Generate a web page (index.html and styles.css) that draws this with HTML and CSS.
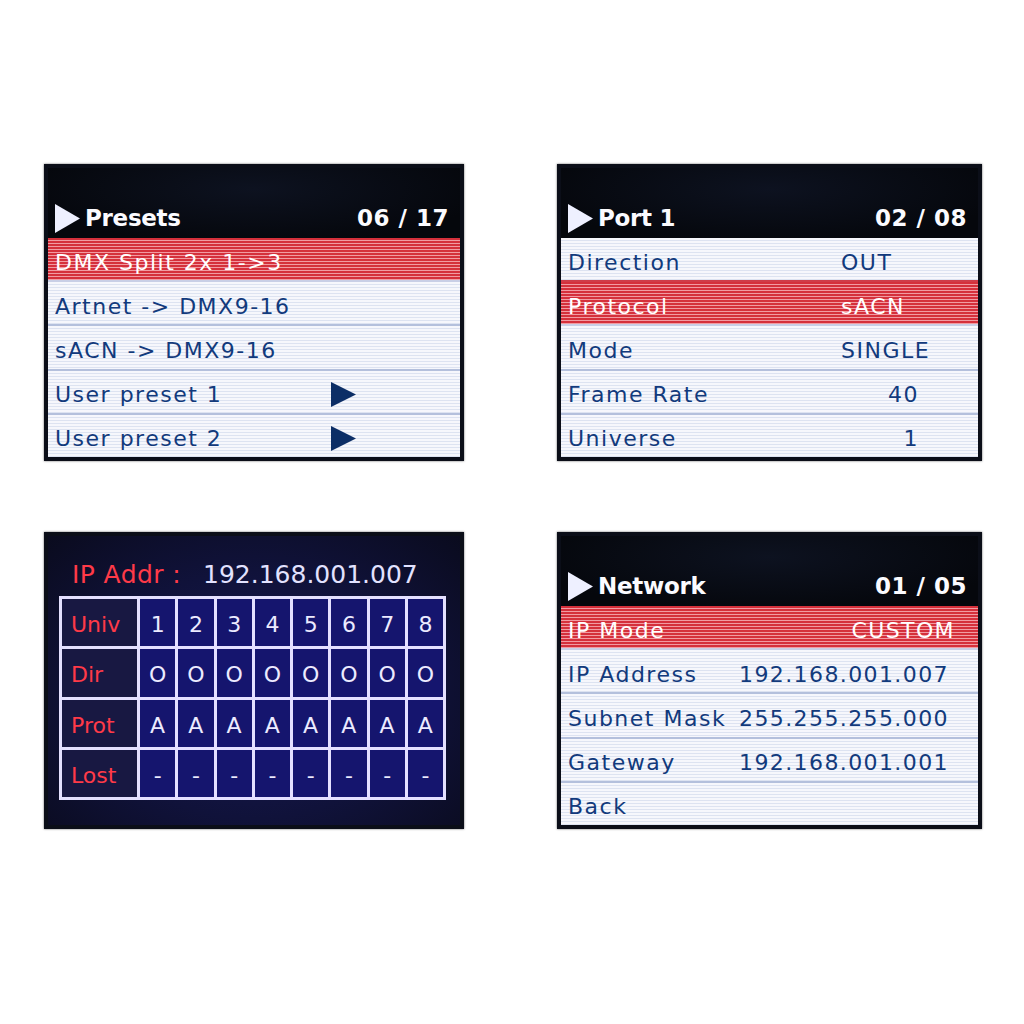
FILE: index.html
```html
<!DOCTYPE html>
<html lang="en">
<head>
  <meta charset="UTF-8" />
  <title>DMX Node - Display Screens</title>
  <link rel="stylesheet" href="styles.css">
</head>
<body>
  <div class="board">

    <!-- Presets menu -->
    <div class="screen">
      <div class="screen-head">
        <svg class="play" viewBox="0 0 25 29"><polygon points="0,0 25,14.5 0,29" /></svg>
        <span class="title">Presets</span>
        <span class="pager">06 / 17</span>
      </div>
      <div class="rows">
        <div class="row active"><span class="label">DMX Split 2x 1-&gt;3</span></div>
        <div class="row"><span class="label">Artnet -&gt; DMX9-16</span></div>
        <div class="row"><span class="label">sACN -&gt; DMX9-16</span></div>
        <div class="row"><span class="label preset">User preset 1</span>
          <svg class="sub" viewBox="0 0 25 25"><polygon points="0,0 25,12.5 0,25" /></svg></div>
        <div class="row"><span class="label preset">User preset 2</span>
          <svg class="sub" viewBox="0 0 25 25"><polygon points="0,0 25,12.5 0,25" /></svg></div>
      </div>
    </div>

    <!-- Port settings -->
    <div class="screen wide">
      <div class="screen-head">
        <svg class="play" viewBox="0 0 25 29"><polygon points="0,0 25,14.5 0,29" /></svg>
        <span class="title">Port 1</span>
        <span class="pager">02 / 08</span>
      </div>
      <div class="rows port">
        <div class="row"><span class="label">Direction</span><span class="value">OUT</span></div>
        <div class="row active"><span class="label">Protocol</span><span class="value">sACN</span></div>
        <div class="row"><span class="label">Mode</span><span class="value">SINGLE</span></div>
        <div class="row"><span class="label">Frame Rate</span><span class="value num">40</span></div>
        <div class="row"><span class="label">Universe</span><span class="value num">1</span></div>
      </div>
    </div>

    <!-- Status overview -->
    <div class="screen status">
      <div class="ip-line"><span class="ip-key">IP Addr :</span><span class="ip-val">192.168.001.007</span></div>
      <div class="grid">
        <div class="cell key">Univ</div>
        <div class="cell">1</div><div class="cell">2</div><div class="cell">3</div><div class="cell">4</div>
        <div class="cell">5</div><div class="cell">6</div><div class="cell">7</div><div class="cell">8</div>
        <div class="cell key">Dir</div>
        <div class="cell">O</div><div class="cell">O</div><div class="cell">O</div><div class="cell">O</div>
        <div class="cell">O</div><div class="cell">O</div><div class="cell">O</div><div class="cell">O</div>
        <div class="cell key">Prot</div>
        <div class="cell">A</div><div class="cell">A</div><div class="cell">A</div><div class="cell">A</div>
        <div class="cell">A</div><div class="cell">A</div><div class="cell">A</div><div class="cell">A</div>
        <div class="cell key">Lost</div>
        <div class="cell">-</div><div class="cell">-</div><div class="cell">-</div><div class="cell">-</div>
        <div class="cell">-</div><div class="cell">-</div><div class="cell">-</div><div class="cell">-</div>
      </div>
    </div>

    <!-- Network settings -->
    <div class="screen wide">
      <div class="screen-head">
        <svg class="play" viewBox="0 0 25 29"><polygon points="0,0 25,14.5 0,29" /></svg>
        <span class="title">Network</span>
        <span class="pager">01 / 05</span>
      </div>
      <div class="rows net">
        <div class="row active"><span class="label">IP Mode</span><span class="value right">CUSTOM</span></div>
        <div class="row"><span class="label">IP Address</span><span class="value">192.168.001.007</span></div>
        <div class="row"><span class="label">Subnet Mask</span><span class="value">255.255.255.000</span></div>
        <div class="row"><span class="label">Gateway</span><span class="value">192.168.001.001</span></div>
        <div class="row"><span class="label">Back</span></div>
      </div>
    </div>

  </div>
</body>
</html>
```

FILE: styles.css
```css
* { margin: 0; padding: 0; box-sizing: border-box; }
body {
  background: #fff;
  font-family: "DejaVu Sans", sans-serif;
  width: 1024px; height: 1024px; overflow: hidden;
}
.board {
  display: grid;
  grid-template-columns: 420px 425px;
  grid-auto-rows: 297px;
  column-gap: 93px; row-gap: 71px;
  padding: 164px 0 0 44px;
}

/* LCD panel */
.screen {
  border: 4px solid #0b0e18;
  background: #05070c;
  display: flex; flex-direction: column;
  box-shadow: 0 0 2px rgba(0, 0, 0, 0.6);
  overflow: hidden;
}
.screen-head {
  height: 70px; flex: none;
  display: flex; align-items: flex-end;
  padding: 0 11px 5px 7px;
  color: #fbfbff;
  background: radial-gradient(ellipse at 50% 30%, #0d1220 0%, #05070c 80%);
}
.play { width: 25px; height: 29px; fill: #eef0ff; margin-right: 5px; flex: none; }
.title { font-weight: bold; font-size: 23px; line-height: 29px; letter-spacing: -0.3px; }
.pager { margin-left: auto; font-weight: bold; font-size: 23px; line-height: 29px; letter-spacing: 0.5px; }

.rows { flex: 1; display: flex; flex-direction: column; }
.row {
  flex: 1;
  display: flex; align-items: center;
  padding: 6px 0 0 7px;
  font-size: 22px;
  letter-spacing: 1.5px;
  color: #123a7c;
  background: repeating-linear-gradient(to bottom, #f6f7fc 0 2px, #dde3f1 2px 3px);
  border-top: 2px solid #b4c0dc;
}
.row:first-child { border-top: none; }
.row.active {
  color: #fff;
  background: repeating-linear-gradient(to bottom, #d5303b 0 2px, #f19ba2 2px 3px);
  border-top-color: #cf3c48;
}
.row.active + .row { border-top-color: #c9cfe6; }

.label { white-space: nowrap; }
.preset { width: 276px; }
.sub { width: 25px; height: 25px; fill: #0c2e66; }

.port .label { width: 273px; }
.port .value { width: 78px; }
.port .value.num { text-align: right; }

.net .label { width: 171px; }
.net .value { width: 216px; letter-spacing: 1.4px; white-space: nowrap; }
.net .value.right { text-align: right; }

/* status overview */
.status {
  background: radial-gradient(ellipse at 50% 55%, #181a55 0%, #10123a 55%, #0a0b1e 100%);
  padding: 24px 14px 25px 11px;
}
.ip-line { display: flex; align-items: baseline; padding-left: 13px; height: 36px; font-size: 25px; }
.ip-key { color: #ff3a48; width: 131px; letter-spacing: 0.4px; }
.ip-val { color: #e2e2ff; letter-spacing: 0; }

.grid {
  flex: 1;
  display: grid;
  grid-template-columns: 75px repeat(8, 1fr);
  grid-template-rows: repeat(4, 1fr);
  gap: 3px; padding: 3px;
  background: #e4e0ff;
}
.cell {
  display: flex; align-items: center; justify-content: center;
  padding-top: 4px;
  background: #15156e;
  color: #ecebff;
  font-size: 22px;
}
.cell.key {
  justify-content: flex-start;
  padding-left: 9px;
  background: #181842;
  color: #ff3a48;
}
```
